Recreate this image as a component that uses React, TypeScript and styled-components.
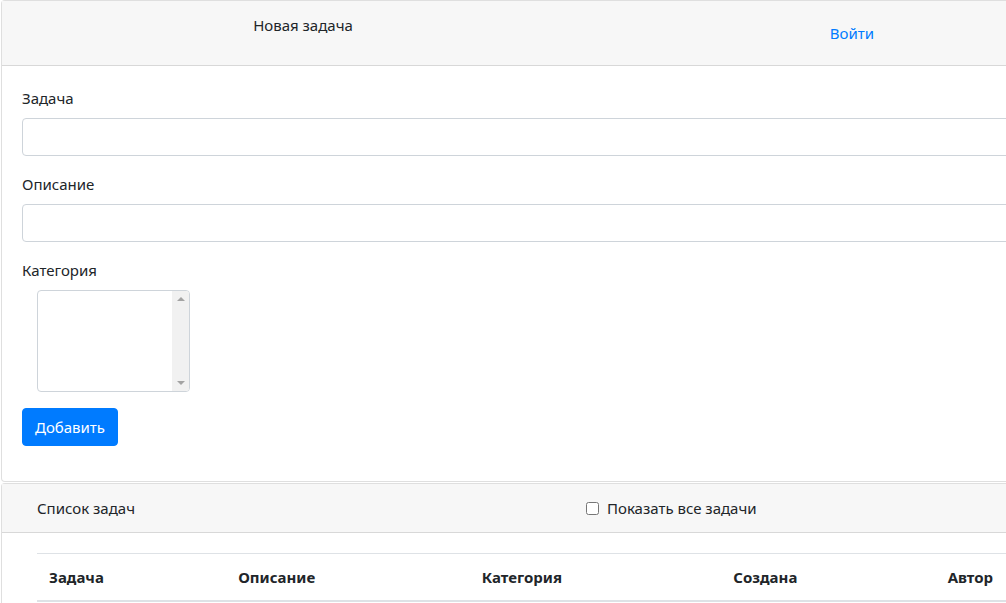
import React from "react";
import styled, { createGlobalStyle } from "styled-components";

const Global = createGlobalStyle`
  html, body { margin: 0; padding: 0; overflow: hidden; background: #fff; }
  body {
    font-family: "Noto Sans", "Open Sans", sans-serif;
    font-size: 15px;
    line-height: 24px;
    color: #212529;
  }
  * { box-sizing: border-box; }
`;

const Page = styled.div`
  width: 1200px;
  padding-left: 1px;
  display: flex;
  flex-direction: column;
  gap: 1px;
`;

const Card = styled.section`
  border: 1px solid rgba(0, 0, 0, 0.125);
  border-radius: 4px;
  background: #fff;
  display: flex;
  flex-direction: column;
`;

const CardHeader = styled.header`
  background: #f7f7f7;
  border-bottom: 1px solid rgba(0, 0, 0, 0.125);
  padding: 12px 20px;
`;

const TopNav = styled.div`
  display: grid;
  grid-template-columns: 562px 536px;
  align-items: start;
`;

const Title = styled.div`
  text-align: center;
  line-height: 24px;
`;

const NavLink = styled.a`
  display: block;
  text-align: center;
  padding: 8px 16px;
  color: #007bff;
  text-decoration: none;
  line-height: 24px;
`;

const CardBody = styled.div<{ $extra?: number }>`
  padding: 20px 20px ${(p) => 20 + (p.$extra ?? 0)}px;
`;

const FormGroup = styled.div`
  display: flex;
  flex-direction: column;
  margin-bottom: 16px;
`;

const Label = styled.label`
  display: block;
  margin-bottom: 8px;
  line-height: 24px;
`;

const Input = styled.input`
  display: block;
  width: 100%;
  height: 38px;
  padding: 6px 12px;
  border: 1px solid #ced4da;
  border-radius: 4px;
  font: inherit;
  background: #fff;
`;

const ListBox = styled.div`
  margin-left: 15px;
  width: 153px;
  height: 102px;
  border: 1px solid #ced4da;
  border-radius: 4px;
  background: #fff;
  display: flex;
  justify-content: flex-end;
  overflow: hidden;
`;

const ScrollTrack = styled.div`
  width: 17px;
  background: #f1f1f1;
  display: flex;
  flex-direction: column;
  justify-content: space-between;
  align-items: center;
  padding: 6px 0 6px;
`;

const Arrow = styled.span<{ $down?: boolean }>`
  width: 0;
  height: 0;
  border-left: 4px solid transparent;
  border-right: 4px solid transparent;
  ${(p) =>
    p.$down
      ? "border-top: 4px solid #a3a3a3;"
      : "border-bottom: 4px solid #a3a3a3;"}
`;

const Button = styled.button`
  align-self: flex-start;
  width: 96px;
  height: 38px;
  padding: 6px 0;
  border: 1px solid #007bff;
  border-radius: 4px;
  background: #007bff;
  color: #fff;
  font: inherit;
  line-height: 24px;
`;

const ListHeader = styled.div`
  display: grid;
  grid-template-columns: 549px 1fr;
  padding: 0 15px;
  line-height: 24px;
`;

const CheckLabel = styled.label`
  display: flex;
  align-items: center;
  gap: 8px;
`;

const Check = styled.input`
  margin: 0;
  width: 13px;
  height: 13px;
`;

const TableWrap = styled.div`
  padding: 0 15px;
`;

const Table = styled.table`
  width: 1100px;
  border-collapse: collapse;
  table-layout: fixed;
`;

const Th = styled.th<{ $w: number }>`
  width: ${(p) => p.$w}px;
  text-align: left;
  font-weight: 700;
  padding: 12px;
  line-height: 22px;
  border-top: 1px solid #dee2e6;
  border-bottom: 2px solid #dee2e6;
`;

const Form = styled.form`
  display: flex;
  flex-direction: column;
`;

export default function App() {
  return (
    <>
      <Global />
      <Page>
        <Card>
          <CardHeader>
            <TopNav>
              <Title>Новая задача</Title>
              <NavLink href="#">Войти</NavLink>
            </TopNav>
          </CardHeader>
          <CardBody $extra={15}>
            <Form onSubmit={(e) => e.preventDefault()}>
              <FormGroup>
                <Label>Задача</Label>
                <Input type="text" />
              </FormGroup>
              <FormGroup>
                <Label>Описание</Label>
                <Input type="text" />
              </FormGroup>
              <FormGroup>
                <Label>Категория</Label>
                <ListBox>
                  <ScrollTrack>
                    <Arrow />
                    <Arrow $down />
                  </ScrollTrack>
                </ListBox>
              </FormGroup>
              <Button type="submit">Добавить</Button>
            </Form>
          </CardBody>
        </Card>
        <Card>
          <CardHeader>
            <ListHeader>
              <span>Список задач</span>
              <CheckLabel>
                <Check type="checkbox" />
                Показать все задачи
              </CheckLabel>
            </ListHeader>
          </CardHeader>
          <CardBody>
            <TableWrap>
              <Table>
                <thead>
                  <tr>
                    <Th $w={188}>Задача</Th>
                    <Th $w={242}>Описание</Th>
                    <Th $w={250}>Категория</Th>
                    <Th $w={213}>Создана</Th>
                    <Th $w={200}>Автор</Th>
                  </tr>
                </thead>
              </Table>
            </TableWrap>
          </CardBody>
        </Card>
      </Page>
    </>
  );
}
